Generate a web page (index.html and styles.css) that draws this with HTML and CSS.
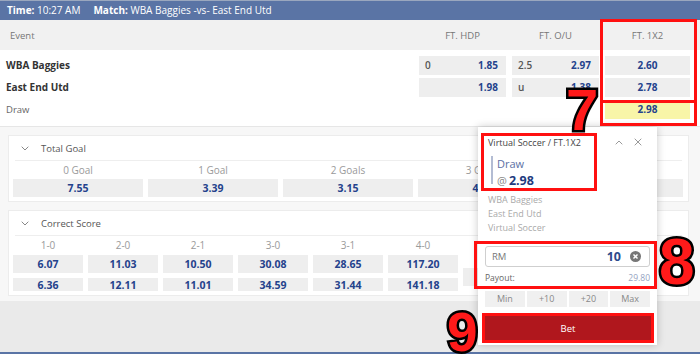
FILE: index.html
```html
<!DOCTYPE html>
<html>
<head>
<meta charset="utf-8">
<link rel="stylesheet" href="styles.css">
</head>
<body>
<div class="page">
  <div class="topbar"><span><b>Time:</b> 10:27 AM</span><span class="match"><b>Match:</b> WBA Baggies -vs- East End Utd</span></div>

  <div class="market">
    <div class="mrow head">
      <div class="ev">Event</div>
      <div class="col">FT. HDP</div>
      <div class="col">FT. O/U</div>
      <div class="col">FT. 1X2</div>
    </div>
    <div class="mrow">
      <div class="ev team">WBA Baggies</div>
      <div class="col"><div class="odd split"><span class="hd">0</span><span class="v">1.85</span></div></div>
      <div class="col"><div class="odd split"><span class="hd">2.5</span><span class="v">2.97</span></div></div>
      <div class="col"><div class="odd"><span class="v">2.60</span></div></div>
    </div>
    <div class="mrow">
      <div class="ev team">East End Utd</div>
      <div class="col"><div class="odd split"><span class="hd"></span><span class="v">1.98</span></div></div>
      <div class="col"><div class="odd split"><span class="hd">u</span><span class="v">1.38</span></div></div>
      <div class="col"><div class="odd"><span class="v">2.78</span></div></div>
    </div>
    <div class="mrow">
      <div class="ev draw">Draw</div>
      <div class="col"></div>
      <div class="col"></div>
      <div class="col"><div class="odd sel"><span class="v">2.98</span></div></div>
    </div>
  </div>

  <div class="sections">
    <div class="card">
      <div class="card-head">
        <svg class="chev" width="8" height="5" viewBox="0 0 8 5"><polyline points="0.7,0.7 4,4 7.3,0.7" fill="none" stroke="#888" stroke-width="1"/></svg>
        <span>Total Goal</span>
      </div>
      <div class="grid tg">
        <div class="lbl">0 Goal</div><div class="lbl">1 Goal</div><div class="lbl">2 Goals</div><div class="lbl">3 Goals</div><div class="lbl">4+ Goals</div>
        <div class="cell">7.55</div><div class="cell">3.39</div><div class="cell">3.15</div><div class="cell">4.25</div><div class="cell">6.80</div>
      </div>
    </div>

    <div class="card">
      <div class="card-head">
        <svg class="chev" width="8" height="5" viewBox="0 0 8 5"><polyline points="0.7,0.7 4,4 7.3,0.7" fill="none" stroke="#888" stroke-width="1"/></svg>
        <span>Correct Score</span>
      </div>
      <div class="grid cs">
        <div class="lbl">1-0</div><div class="lbl">2-0</div><div class="lbl">2-1</div><div class="lbl">3-0</div><div class="lbl">3-1</div><div class="lbl">4-0</div><div class="lbl">AOS</div>
        <div class="cell">6.07</div><div class="cell">11.03</div><div class="cell">10.50</div><div class="cell">30.08</div><div class="cell">28.65</div><div class="cell">117.20</div>
        <div class="cell aos">35.00</div>
        <div class="cell">6.36</div><div class="cell">12.11</div><div class="cell">11.01</div><div class="cell">34.59</div><div class="cell">31.44</div><div class="cell">141.18</div>
      </div>
    </div>
  </div>
</div>
<div class="bottombar"></div>

<div class="betslip">
  <div class="bs-head">
    <span class="bs-title">Virtual Soccer / FT.1X2</span>
    <span class="bs-icons">
      <svg width="8" height="5" viewBox="0 0 8 5"><polyline points="0.7,4.3 4,1 7.3,4.3" fill="none" stroke="#999" stroke-width="1"/></svg>
      <svg width="8" height="8" viewBox="0 0 8 8"><path d="M0.7 0.7 L7.3 7.3 M7.3 0.7 L0.7 7.3" stroke="#999" stroke-width="1"/></svg>
    </span>
  </div>
  <div class="bs-pick">
    <div class="bs-sel">Draw</div>
    <div class="bs-price"><span class="at">@</span><b>2.98</b></div>
  </div>
  <div class="bs-info">
    <div>WBA Baggies</div>
    <div>East End Utd</div>
    <div>Virtual Soccer</div>
  </div>
  <div class="bs-stake">
    <span class="cur">RM</span>
    <span class="amt">10</span>
    <svg class="clr" width="11" height="11" viewBox="0 0 12 12"><circle cx="6" cy="6" r="6" fill="#777"/><path d="M3.8 3.8 L8.2 8.2 M8.2 3.8 L3.8 8.2" stroke="#fff" stroke-width="1.6"/></svg>
  </div>
  <div class="bs-payout"><span>Payout:</span><span class="pv">29.80</span></div>
  <div class="bs-quick">
    <div class="q">Min</div><div class="q">+10</div><div class="q">+20</div><div class="q">Max</div>
  </div>
  <div class="bs-bet">Bet</div>
</div>

<div class="mark box7"></div>
<div class="mark box7b"></div>
<div class="mark boxpick"></div>
<div class="mark box8"></div>
<div class="num n7">7</div>
<div class="num n8">8</div>
<div class="num n9">9</div>
</body>
</html>
```

FILE: styles.css
```css
html, body {
  margin: 0;
  padding: 0;
}
body {
  width: 700px;
  height: 354px;
  overflow: hidden;
  background: #eaeaea;
  font-family: "Open Sans", "Noto Sans", sans-serif;
  position: relative;
}
.page {
  background: #f7f7f7;
}
.topbar {
  height: 20px;
  background: #5a74a5;
  color: #fff;
  font-size: 10px;
  line-height: 19px;
  padding-left: 7px;
  display: flex;
  gap: 13px;
  border-top: 1px solid #9aa7be;
  box-sizing: border-box;
}
.topbar b { font-weight: 700; }

.market {
  background: #fff;
  padding-bottom: 6px;
  border-bottom: 1px solid #e6e6e6;
}
.mrow {
  display: grid;
  grid-template-columns: 416px 93px 93px 91px;
  height: 22px;
  align-items: center;
}
.mrow.head {
  height: 30px;
  background: #f1f1f1;
  color: #777;
  font-size: 9.5px;
  margin-bottom: 4px;
}
.mrow.head .col { text-align: center; }
.ev {
  padding-left: 6px;
  font-size: 10px;
}
.head .ev { padding-left: 10px; font-size: 9.5px; }
.team { font-weight: 700; color: #333; }
.draw { color: #666; font-size: 9.5px; }
.col { padding: 0 3px; }
.odd {
  height: 19px;
  background: #eeeeee;
  display: flex;
  align-items: center;
  justify-content: center;
  font-size: 10px;
  font-weight: 700;
  color: #24428c;
}
.odd.split { justify-content: space-between; padding: 0 8px 0 6px; }
.odd .hd { color: #555; font-weight: 600; }
.odd.sel { background: #f8f5a8; }

.sections {
  padding: 8px 11px 5px 8px;
  display: flex;
  flex-direction: column;
  gap: 8px;
}
.card {
  background: #fff;
  border: 1px solid #ececec;
  padding: 0 4px 4px;
}
.card-head {
  height: 24px;
  border-bottom: 1px solid #eeeeee;
  display: flex;
  align-items: center;
  padding-left: 6px;
  margin: 0 2px;
  font-size: 9.5px;
  color: #555;
}
.card-head .chev { margin-right: 12px; margin-top: 1px; }
.grid {
  display: grid;
  column-gap: 5px;
}
.tg { grid-template-columns: repeat(5, 130px); grid-template-rows: 18px 18px; }
.cs { grid-template-columns: repeat(7, 70px); grid-template-rows: 19px 18px 18px; }
.cs .cell:nth-child(n+15) { margin-top: 5px; }
.lbl {
  text-align: center;
  font-size: 10px;
  color: #9a9a9a;
  line-height: 18px;
}
.cell {
  background: #eeeeee;
  color: #24428c;
  font-weight: 700;
  font-size: 10.5px;
  display: flex;
  align-items: center;
  justify-content: center;
}
.cs .aos {
  grid-column: 7;
  grid-row: 2 / span 2;
  height: 18px;
  align-self: center;
  margin-top: 8px;
}

.bottombar {
  position: absolute;
  left: 0;
  right: 0;
  bottom: 0;
  height: 2px;
  background: #5a74a5;
}

/* betslip popup */
.betslip {
  position: absolute;
  left: 478px;
  top: 127px;
  width: 179px;
  height: 218px;
  box-sizing: border-box;
  padding: 0 7px;
  background: #fff;
  box-shadow: 0 0 8px rgba(0,0,0,0.22);
}
.bs-head {
  height: 24px;
  display: flex;
  align-items: center;
  justify-content: space-between;
  padding-left: 3px;
  padding-top: 3px;
  font-size: 9px;
  color: #444;
}
.bs-icons { display: flex; gap: 11px; align-items: center; padding-right: 8px; }
.bs-pick {
  margin: 4px 0 0 6px;
  border-left: 2px solid #b3bcd3;
  padding-left: 4px;
  height: 28px;
}
.bs-sel { font-size: 11px; color: #5d70a4; line-height: 16px; margin-top: -2px; }
.bs-price { font-size: 11px; line-height: 18px; }
.bs-price .at { color: #888; margin-right: 2px; }
.bs-price b { font-size: 12.5px; color: #1e3b80; }
.bs-info {
  margin-top: 9px;
  padding-left: 3px;
  font-size: 9px;
  line-height: 14px;
  color: #aaa;
}
.bs-stake {
  margin-top: 11px;
  height: 21px;
  border: 1px solid #cfcfcf;
  border-radius: 3px;
  box-sizing: border-box;
  display: flex;
  align-items: center;
  padding: 0 8px 0 6px;
  font-size: 9.5px;
}
.cur { color: #777; flex: 1; }
.amt { font-size: 12.5px; font-weight: 700; color: #2d4a8c; margin-right: 9px; }
.bs-payout {
  display: flex;
  justify-content: space-between;
  font-size: 8.5px;
  color: #666;
  margin-top: 4px;
  line-height: 14px;
}
.pv { color: #95a4c2; }
.bs-quick {
  margin-top: 6px;
  display: grid;
  grid-template-columns: repeat(4, 1fr);
  gap: 2px;
}
.q {
  height: 16px;
  background: #f0f0f0;
  color: #888;
  font-size: 9px;
  text-align: center;
  line-height: 16px;
}
.bs-bet {
  margin: 6px -4px 0 -3px;
  height: 30px;
  box-sizing: border-box;
  border: 3px solid #ff1010;
  background: #b0171d;
  color: #fff;
  font-size: 9.5px;
  display: flex;
  align-items: center;
  justify-content: center;
}

/* annotation marks */
.mark {
  position: absolute;
  border: 3px solid #ff1010;
  box-sizing: border-box;
}
.box7 { left: 600px; top: 19px; width: 97px; height: 107px; }
.box7b { left: 600px; top: 100px; width: 97px; height: 3px; border-width: 3px 0 0 0; }
.boxpick { left: 481px; top: 133px; width: 116px; height: 58px; }
.box8 { left: 474px; top: 241px; width: 183px; height: 48px; }
.num {
  position: absolute;
  font-family: "Liberation Sans", Arial, sans-serif;
  font-weight: 700;
  color: #ff1a1a;
  line-height: 1;
  -webkit-text-stroke: 5px #000;
  paint-order: stroke fill;
}
.n7 { left: 566px; top: 81px; font-size: 58px; }
.n8 { left: 659px; top: 230px; font-size: 64px; }
.n9 { left: 447px; top: 305px; font-size: 55px; }
```
